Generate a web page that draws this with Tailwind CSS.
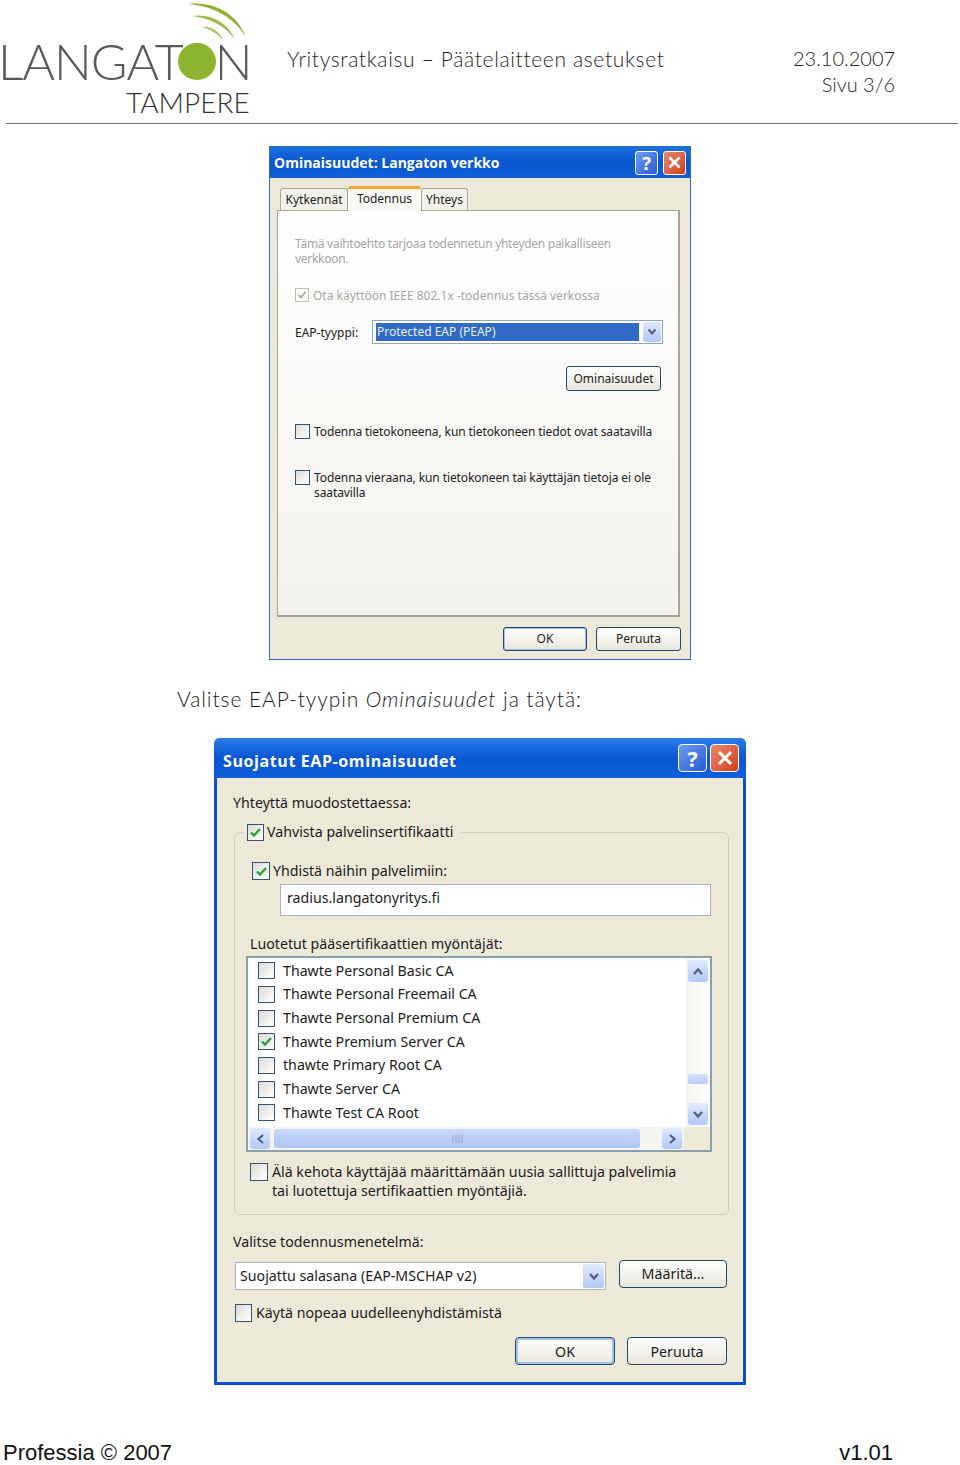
<!DOCTYPE html>
<html lang="fi">

<head>
    <meta charset="UTF-8">
    <meta name="viewport" content="width=device-width, initial-scale=1.0">
    <title>Päätelaitteen asetukset</title>
    <script src="https://cdn.jsdelivr.net/npm/@tailwindcss/browser@4"></script>
</head>

<body class="bg-white w-[960px] h-[1465px] overflow-hidden font-['Liberation_Sans',sans-serif]">
    <!-- Header -->
    <header class="flex h-[123px] text-[#1f1f1f] font-['Lato',sans-serif]">
        <div class="relative w-[287px] shrink-0">
            <svg class="absolute left-[180px] top-0" width="72" height="44" viewBox="180 0 72 44">
                <path d="M188 4 C212 1 236 12 246 37 C233 16 212 6 188 4 Z" fill="#8fb22f" />
                <path d="M192 16 C210 13 227 22 235 39 C224 25 209 18 192 16 Z" fill="#9dbb4a" />
                <path d="M202 27 C211 26 219 31 223 40 C216 33 210 29 202 27 Z" fill="#aac560" />
            </svg>
            <div class="flex items-center pt-[36px] -ml-[2px] h-[86px] text-[50px] leading-[50px] font-light text-[#58595b]">
                <span class="tracking-[-1px]">LANGAT</span>
                <span class="w-[38px] h-[37px] rounded-full bg-[#8db42e] shrink-0 -ml-[5px]"></span>
                <span class="-ml-[1px]">N</span>
            </div>
            <p class="text-[28px] leading-[25px] font-light text-[#333] absolute left-[126px] top-[90px]">TAMPERE</p>
        </div>
        <p class="w-[506px] pt-[47px] text-[21px] leading-[24px] tracking-[0.65px] font-light">Yritysratkaisu – Päätelaitteen asetukset</p>
        <div class="w-[102px] pt-[45px] text-right text-[20px] leading-[26px] font-light">
            <p>23.10.2007</p>
            <p>Sivu 3/6</p>
        </div>
    </header>
    <div class="h-px ml-[6px] w-[952px] bg-[#777]"></div>

    <!-- First dialog -->
    <section class="w-[422px] h-[514px] ml-[269px] mt-[22px] border border-[#2f6db5] bg-[#ece9d8] text-[#222] text-[12px] leading-[15px] font-['Noto_Sans',sans-serif]">
        <div class="h-[31px] flex items-center pl-[4px] pr-[4px] bg-gradient-to-b from-[#1a6fe0] via-[#0a56d0] to-[#0f5fd8]">
            <h2 class="flex-1 text-white font-bold text-[14px] font-['Open_Sans',sans-serif]">Ominaisuudet: Langaton verkko</h2>
            <div class="w-[23px] h-[24px] rounded-[3px] border border-white bg-gradient-to-br from-[#6f9bf0] to-[#2a5ad8] text-white font-bold text-[18px] leading-[22px] text-center">?</div>
            <div class="w-[23px] h-[24px] ml-[5px] rounded-[3px] border border-white bg-gradient-to-br from-[#e98a6c] to-[#cf3a18] flex items-center justify-center">
                <svg width="15" height="15" viewBox="0 0 15 15"><path d="M2.5 2.5 L12.5 12.5 M12.5 2.5 L2.5 12.5" stroke="#fff" stroke-width="2.6" /></svg>
            </div>
        </div>
        <!-- Tabs -->
        <div class="flex items-end h-[32px] pl-[10px] relative z-10">
            <div class="w-[68px] h-[22px] rounded-t-[3px] border border-b-0 border-[#a8a89a] bg-[#f3f2ea] text-center leading-[22px]">Kytkennät</div>
            <div class="w-[73px] h-[25px] -mb-px rounded-t-[3px] border-t-[3px] border-[#f2a93c] bg-[#f8f8f5] text-center leading-[20px]">Todennus</div>
            <div class="w-[47px] h-[22px] rounded-t-[3px] border border-b-0 border-[#a8a89a] bg-[#f3f2ea] text-center leading-[22px]">Yhteys</div>
        </div>
        <div class="w-[403px] h-[407px] ml-[7px] border border-[#a5a59b] border-r-2 border-b-2 bg-gradient-to-b from-white to-[#f3f2ed] pl-[17px]">
            <p class="mt-[25px] text-[#a6a6a6] w-[330px] tracking-[-0.28px]">Tämä vaihtoehto tarjoaa todennetun yhteyden paikalliseen verkkoon.</p>
            <div class="flex items-center gap-[4px] mt-[22px] h-[14px] text-[#a6a6a6]">
                <span class="w-[14px] h-[14px] border border-[#c0c0b8] flex items-center justify-center">
                    <svg width="10" height="10" viewBox="0 0 10 10"><path d="M1.5 5 L4 7.5 L8.5 2" fill="none" stroke="#b5b5ad" stroke-width="2" /></svg>
                </span>
                <span>Ota käyttöön IEEE 802.1x -todennus tässä verkossa</span>
            </div>
            <div class="flex items-center mt-[18px] h-[24px]">
                <span class="w-[77px]">EAP-tyyppi:</span>
                <div class="w-[291px] h-[24px] border border-[#8fa5bb] bg-white flex items-center pl-[3px] pr-px">
                    <span class="w-[264px] h-[18px] bg-[#316ac5] text-[#e8eefa] pl-[1px] leading-[17px]">Protected EAP (PEAP)</span>
                    <span class="w-[18px] h-[20px] ml-[4px] rounded-[2px] bg-gradient-to-b from-[#dfe8fc] to-[#b4c8f5] flex items-center justify-center">
                        <svg width="10" height="8" viewBox="0 0 10 8"><path d="M1.5 1.5 L5 5.5 L8.5 1.5" fill="none" stroke="#4d6185" stroke-width="2" /></svg>
                    </span>
                </div>
            </div>
            <div class="flex justify-end mt-[22px] mr-[17px]">
                <div class="w-[95px] h-[25px] rounded-[3px] border border-[#1f4a6e] bg-gradient-to-b from-white to-[#e8e6da] text-center leading-[23px]">Ominaisuudet</div>
            </div>
            <div class="flex gap-[4px] mt-[33px] h-[14px] items-center">
                <span class="w-[15px] h-[15px] shrink-0 border border-[#33556f] bg-gradient-to-br from-[#dcdcd5] to-white"></span>
                <span class="tracking-[-0.1px]">Todenna tietokoneena, kun tietokoneen tiedot ovat saatavilla</span>
            </div>
            <div class="flex gap-[4px] mt-[32px]">
                <span class="w-[15px] h-[15px] shrink-0 border border-[#33556f] bg-gradient-to-br from-[#dcdcd5] to-white"></span>
                <span class="w-[345px] tracking-[-0.1px]">Todenna vieraana, kun tietokoneen tai käyttäjän tietoja ei ole saatavilla</span>
            </div>
        </div>
        <div class="flex justify-end gap-[9px] mt-[10px] pr-[9px]">
            <div class="w-[84px] h-[24px] rounded-[3px] border border-[#1f4a6e] ring-1 ring-inset ring-[#a6c0e8] bg-gradient-to-b from-white to-[#e8e6da] text-center leading-[22px]">OK</div>
            <div class="w-[85px] h-[24px] rounded-[3px] border border-[#1f4a6e] bg-gradient-to-b from-white to-[#e8e6da] text-center leading-[22px]">Peruuta</div>
        </div>
    </section>

    <!-- Caption -->
    <p class="ml-[177px] mt-[26px] h-[26px] text-[21px] leading-[26px] text-[#1a1a1a] tracking-[0.92px] font-light font-['Lato',sans-serif]">Valitse EAP-tyypin <em>Ominaisuudet</em> ja täytä:</p>

    <!-- Second dialog -->
    <section class="w-[532px] h-[647px] ml-[214px] mt-[26px] border-x-[3px] border-b-[3px] border-[#0a4fd6] rounded-t-[6px] bg-[#ece9d8] text-[#1c1c1c] text-[14.2px] leading-[18px] font-['Noto_Sans',sans-serif]">
        <div class="h-[40px] -mx-[3px] flex items-center pl-[9px] pr-[7px] rounded-t-[6px] bg-gradient-to-b from-[#2a7ce8] via-[#0a56d4] to-[#0d5fdc]">
            <h2 class="flex-1 pt-[5px] text-white font-bold text-[16px] tracking-[0.6px] font-['Open_Sans',sans-serif]">Suojatut EAP-ominaisuudet</h2>
            <div class="w-[29px] h-[28px] rounded-[4px] border border-white bg-gradient-to-br from-[#6f9bf0] to-[#2a5ad8] text-white font-bold text-[22px] leading-[26px] text-center">?</div>
            <div class="w-[29px] h-[28px] ml-[3px] rounded-[4px] border border-white bg-gradient-to-br from-[#e98a6c] to-[#cf3a18] flex items-center justify-center">
                <svg width="18" height="18" viewBox="0 0 18 18"><path d="M3 3 L15 15 M15 3 L3 15" stroke="#fff" stroke-width="3" /></svg>
            </div>
        </div>
        <p class="mt-[16px] ml-[16px]">Yhteyttä muodostettaessa:</p>

        <div class="mt-[20px] ml-[17px] w-[495px] h-[383px] border border-[#d0d0bf] rounded-[6px]">
            <div class="flex items-center w-fit h-[18px] -mt-[10px] ml-[8px] pl-[4px] pr-[8px] gap-[3px] bg-[#ece9d8]">
                <span class="w-[17px] h-[17px] border border-[#33556f] bg-gradient-to-br from-[#dcdcd5] to-white flex items-center justify-center">
                    <svg width="13" height="13" viewBox="0 0 13 13"><path d="M2 6.5 L5 9.5 L11 3" fill="none" stroke="#2f9e3f" stroke-width="2.4" /></svg>
                </span>
                <span>Vahvista palvelinsertifikaatti</span>
            </div>
            <div class="flex items-center h-[18px] mt-[21px] ml-[17px] gap-[3px]">
                <span class="w-[18px] h-[18px] border border-[#33556f] bg-gradient-to-br from-[#dcdcd5] to-white flex items-center justify-center">
                    <svg width="13" height="13" viewBox="0 0 13 13"><path d="M2 6.5 L5 9.5 L11 3" fill="none" stroke="#2f9e3f" stroke-width="2.4" /></svg>
                </span>
                <span>Yhdistä näihin palvelimiin:</span>
            </div>
            <div class="mt-[4px] ml-[45px] w-[431px] h-[32px] border border-[#a9b7c9] bg-white pl-[6px] leading-[26px]">radius.langatonyritys.fi</div>
            <p class="mt-[19px] ml-[15px]">Luotetut pääsertifikaattien myöntäjät:</p>

            <!-- Certificate list -->
            <div class="mt-[3px] ml-[11px] w-[466px] h-[196px] border-2 border-[#8a9fb0] bg-white flex flex-col">
                <div class="flex h-[169px]">
                    <ul class="flex-1 pt-px pl-[10px]">
                        <li class="flex items-center gap-[8px] h-[23.67px]"><span class="w-[17px] h-[17px] border border-[#33556f] bg-gradient-to-br from-[#dcdcd5] to-white"></span>Thawte Personal Basic CA</li>
                        <li class="flex items-center gap-[8px] h-[23.67px]"><span class="w-[17px] h-[17px] border border-[#33556f] bg-gradient-to-br from-[#dcdcd5] to-white"></span>Thawte Personal Freemail CA</li>
                        <li class="flex items-center gap-[8px] h-[23.67px]"><span class="w-[17px] h-[17px] border border-[#33556f] bg-gradient-to-br from-[#dcdcd5] to-white"></span>Thawte Personal Premium CA</li>
                        <li class="flex items-center gap-[8px] h-[23.67px]"><span class="w-[17px] h-[17px] border border-[#33556f] bg-gradient-to-br from-[#dcdcd5] to-white flex items-center justify-center"><svg width="13" height="13" viewBox="0 0 13 13"><path d="M2 6.5 L5 9.5 L11 3" fill="none" stroke="#2f9e3f" stroke-width="2.4" /></svg></span>Thawte Premium Server CA</li>
                        <li class="flex items-center gap-[8px] h-[23.67px]"><span class="w-[17px] h-[17px] border border-[#33556f] bg-gradient-to-br from-[#dcdcd5] to-white"></span>thawte Primary Root CA</li>
                        <li class="flex items-center gap-[8px] h-[23.67px]"><span class="w-[17px] h-[17px] border border-[#33556f] bg-gradient-to-br from-[#dcdcd5] to-white"></span>Thawte Server CA</li>
                        <li class="flex items-center gap-[8px] h-[23.67px]"><span class="w-[17px] h-[17px] border border-[#33556f] bg-gradient-to-br from-[#dcdcd5] to-white"></span>Thawte Test CA Root</li>
                    </ul>
                    <div class="w-[24px] flex flex-col items-center pt-[2px] bg-gradient-to-r from-[#f4f3ee] to-white">
                        <span class="w-[20px] h-[22px] rounded-[3px] bg-gradient-to-b from-[#e1eafe] to-[#b3c8f7] flex items-center justify-center">
                            <svg width="12" height="9" viewBox="0 0 12 9"><path d="M2 7 L6 2.5 L10 7" fill="none" stroke="#4d6185" stroke-width="2.2" /></svg>
                        </span>
                        <span class="w-[20px] h-[10px] mt-[92px] rounded-[2px] bg-gradient-to-b from-[#d5e0fb] to-[#b9ccf6]"></span>
                        <span class="w-[20px] h-[22px] mt-[19px] rounded-[3px] bg-gradient-to-b from-[#e1eafe] to-[#b3c8f7] flex items-center justify-center">
                            <svg width="12" height="9" viewBox="0 0 12 9"><path d="M2 2 L6 6.5 L10 2" fill="none" stroke="#4d6185" stroke-width="2.2" /></svg>
                        </span>
                    </div>
                </div>
                <div class="flex items-center h-[23px] bg-[#f6f5f0]">
                    <span class="w-[20px] h-[21px] ml-[2px] rounded-[3px] bg-gradient-to-b from-[#e1eafe] to-[#b3c8f7] flex items-center justify-center">
                        <svg width="9" height="12" viewBox="0 0 9 12"><path d="M7 2 L2.5 6 L7 10" fill="none" stroke="#4d6185" stroke-width="2.2" /></svg>
                    </span>
                    <span class="w-[366px] h-[19px] ml-[4px] rounded-[3px] bg-gradient-to-b from-[#c9d8fa] to-[#aec4f5] flex items-center justify-center">
                        <svg width="11" height="8" viewBox="0 0 11 8"><path d="M1 0 V8 M4 0 V8 M7 0 V8 M10 0 V8" stroke="#8fa6d8" stroke-width="1" /></svg>
                    </span>
                    <span class="w-[20px] h-[21px] ml-[22px] rounded-[3px] bg-gradient-to-b from-[#e1eafe] to-[#b3c8f7] flex items-center justify-center">
                        <svg width="9" height="12" viewBox="0 0 9 12"><path d="M2 2 L6.5 6 L2 10" fill="none" stroke="#4d6185" stroke-width="2.2" /></svg>
                    </span>
                    <span class="flex-1 h-full ml-[2px] bg-[#ece9d8]"></span>
                </div>
            </div>

            <div class="flex gap-[4px] mt-[10px] ml-[15px]">
                <span class="w-[18px] h-[18px] mt-px border border-[#33556f] bg-gradient-to-br from-[#dcdcd5] to-white shrink-0"></span>
                <span class="w-[410px] leading-[19px]">Älä kehota käyttäjää määrittämään uusia sallittuja palvelimia tai luotettuja sertifikaattien myöntäjiä.</span>
            </div>
        </div>

        <p class="mt-[18px] ml-[16px]">Valitse todennusmenetelmä:</p>
        <div class="flex mt-[9px] ml-[18px] h-[30px]">
            <div class="w-[371px] h-[28px] mt-[2px] border border-[#a9b7c9] bg-white flex items-center pl-[4px] pr-px">
                <span class="flex-1">Suojattu salasana (EAP-MSCHAP v2)</span>
                <span class="w-[21px] h-[24px] rounded-[2px] bg-gradient-to-b from-[#e1eafe] to-[#b3c8f7] flex items-center justify-center">
                    <svg width="12" height="9" viewBox="0 0 12 9"><path d="M2 2 L6 6.5 L10 2" fill="none" stroke="#4d6185" stroke-width="2.2" /></svg>
                </span>
            </div>
            <div class="w-[108px] h-[28px] ml-[13px] rounded-[4px] border border-[#1f4a6e] bg-gradient-to-b from-white to-[#e8e6da] text-center leading-[26px]">Määritä...</div>
        </div>
        <div class="flex items-center gap-[4px] mt-[14px] ml-[18px] h-[18px]">
            <span class="w-[17px] h-[18px] border border-[#33556f] bg-gradient-to-br from-[#dcdcd5] to-white"></span>
            <span>Käytä nopeaa uudelleenyhdistämistä</span>
        </div>
        <div class="flex justify-end gap-[12px] mt-[15px] pr-[16px]">
            <div class="w-[100px] h-[28px] rounded-[4px] border border-[#1f4a6e] ring-2 ring-inset ring-[#a6c0e8] bg-gradient-to-b from-white to-[#e8e6da] text-center leading-[28px]">OK</div>
            <div class="w-[100px] h-[28px] rounded-[4px] border border-[#1f4a6e] bg-gradient-to-b from-white to-[#e8e6da] text-center leading-[28px]">Peruuta</div>
        </div>
    </section>

    <!-- Footer -->
    <footer class="flex justify-between ml-[3px] w-[890px] mt-[55px] text-[22px] leading-[26px] text-[#111]">
        <span>Professia © 2007</span>
        <span>v1.01</span>
    </footer>
</body>

</html>
